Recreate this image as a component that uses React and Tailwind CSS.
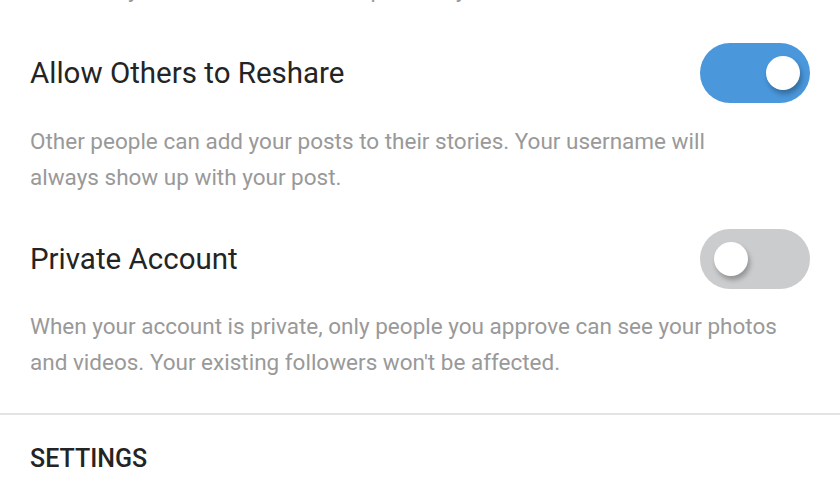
import React, { useState } from 'react';

function Toggle({ on, onChange }) {
  return (
    <button
      onClick={onChange}
      className={`relative w-[110px] h-[60px] rounded-full shrink-0 transition ${on ? 'bg-[#4a97db]' : 'bg-[#cbcccd]'}`}
    >
      <span
        className={`absolute top-[13px] w-[34px] h-[34px] rounded-full bg-white shadow-[2px_4px_5px_rgba(0,0,0,0.28)] ${on ? 'left-[66px]' : 'left-[14px]'}`}
      />
    </button>
  );
}

export default function App() {
  const [reshare, setReshare] = useState(true);
  const [priv, setPriv] = useState(false);

  return (
    <div className="w-[840px] h-[504px] overflow-hidden bg-white font-['Roboto',sans-serif]">
      {/* cut-off description from the section above */}
      <p className="-mt-[29px] px-[30px] text-[22.5px] leading-[36px] text-[#999] whitespace-nowrap">
        accounts you follow and see their posts in your feed.
      </p>

      <div className="px-[30px] mt-[36px] flex items-center justify-between">
        <span className="text-[29.5px] text-[#242424]">Allow Others to Reshare</span>
        <Toggle on={reshare} onChange={() => setReshare(!reshare)} />
      </div>
      <p className="pl-[30px] pr-[100px] mt-[20px] text-[22.5px] leading-[36px] text-[#999]">
        Other people can add your posts to their stories. Your username will always show up with your post.
      </p>

      <div className="px-[30px] mt-[34px] flex items-center justify-between">
        <span className="text-[29.5px] text-[#242424]">Private Account</span>
        <Toggle on={priv} onChange={() => setPriv(!priv)} />
      </div>
      <p className="px-[30px] mt-[19px] text-[22.5px] leading-[36px] text-[#999]">
        When your account is private, only people you approve can see your photos and videos. Your existing followers won't be affected.
      </p>

      <div className="mt-[33px] border-t-2 border-[#e4e4e4]" />
      <div className="px-[30px] pt-[29px] text-[25px] leading-[30px] font-medium text-[#242424]">SETTINGS</div>
    </div>
  );
}
